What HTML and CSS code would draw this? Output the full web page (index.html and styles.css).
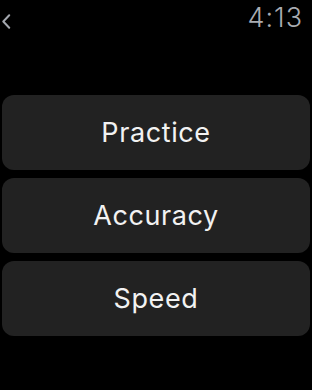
FILE: index.html
```html
<!DOCTYPE html>
<html>
<head>
<meta charset="utf-8">
<link rel="stylesheet" href="styles.css">
</head>
<body>
<div class="screen">
  <header class="status">
    <svg class="back" width="10" height="15" viewBox="0 0 10 15"><path d="M8.2 1.3 L2.3 7.5 L8.2 13.7" fill="none" stroke="#a3a7ae" stroke-width="2" stroke-linecap="round" stroke-linejoin="round"/></svg>
    <span class="time">4:13</span>
  </header>
  <main class="menu">
    <button class="item">Practice</button>
    <button class="item">Accuracy</button>
    <button class="item">Speed</button>
  </main>
</div>
</body>
</html>
```
FILE: styles.css
```css
html, body {
  margin: 0;
  padding: 0;
  background: #000;
}
.screen {
  width: 312px;
  height: 390px;
  background: #000;
  font-family: Inter, "Open Sans", sans-serif;
}
.status {
  display: flex;
  justify-content: space-between;
  align-items: center;
  height: 38px;
  padding: 0 9px 0 1px;
}
.back {
  display: block;
  margin-top: 4px;
}
.time {
  color: #a9acb2;
  font-size: 27px;
  font-weight: 300;
  letter-spacing: 1px;
  margin-top: -3px;
}
.menu {
  display: flex;
  flex-direction: column;
  gap: 8px;
  padding: 57px 2px 0 2px;
}
.item {
  height: 75px;
  border: none;
  border-radius: 12px;
  background: #222222;
  color: #f2f2f2;
  font-family: inherit;
  font-size: 27px;
  font-weight: 400;
  letter-spacing: 0.6px;
  padding: 0;
}
```
